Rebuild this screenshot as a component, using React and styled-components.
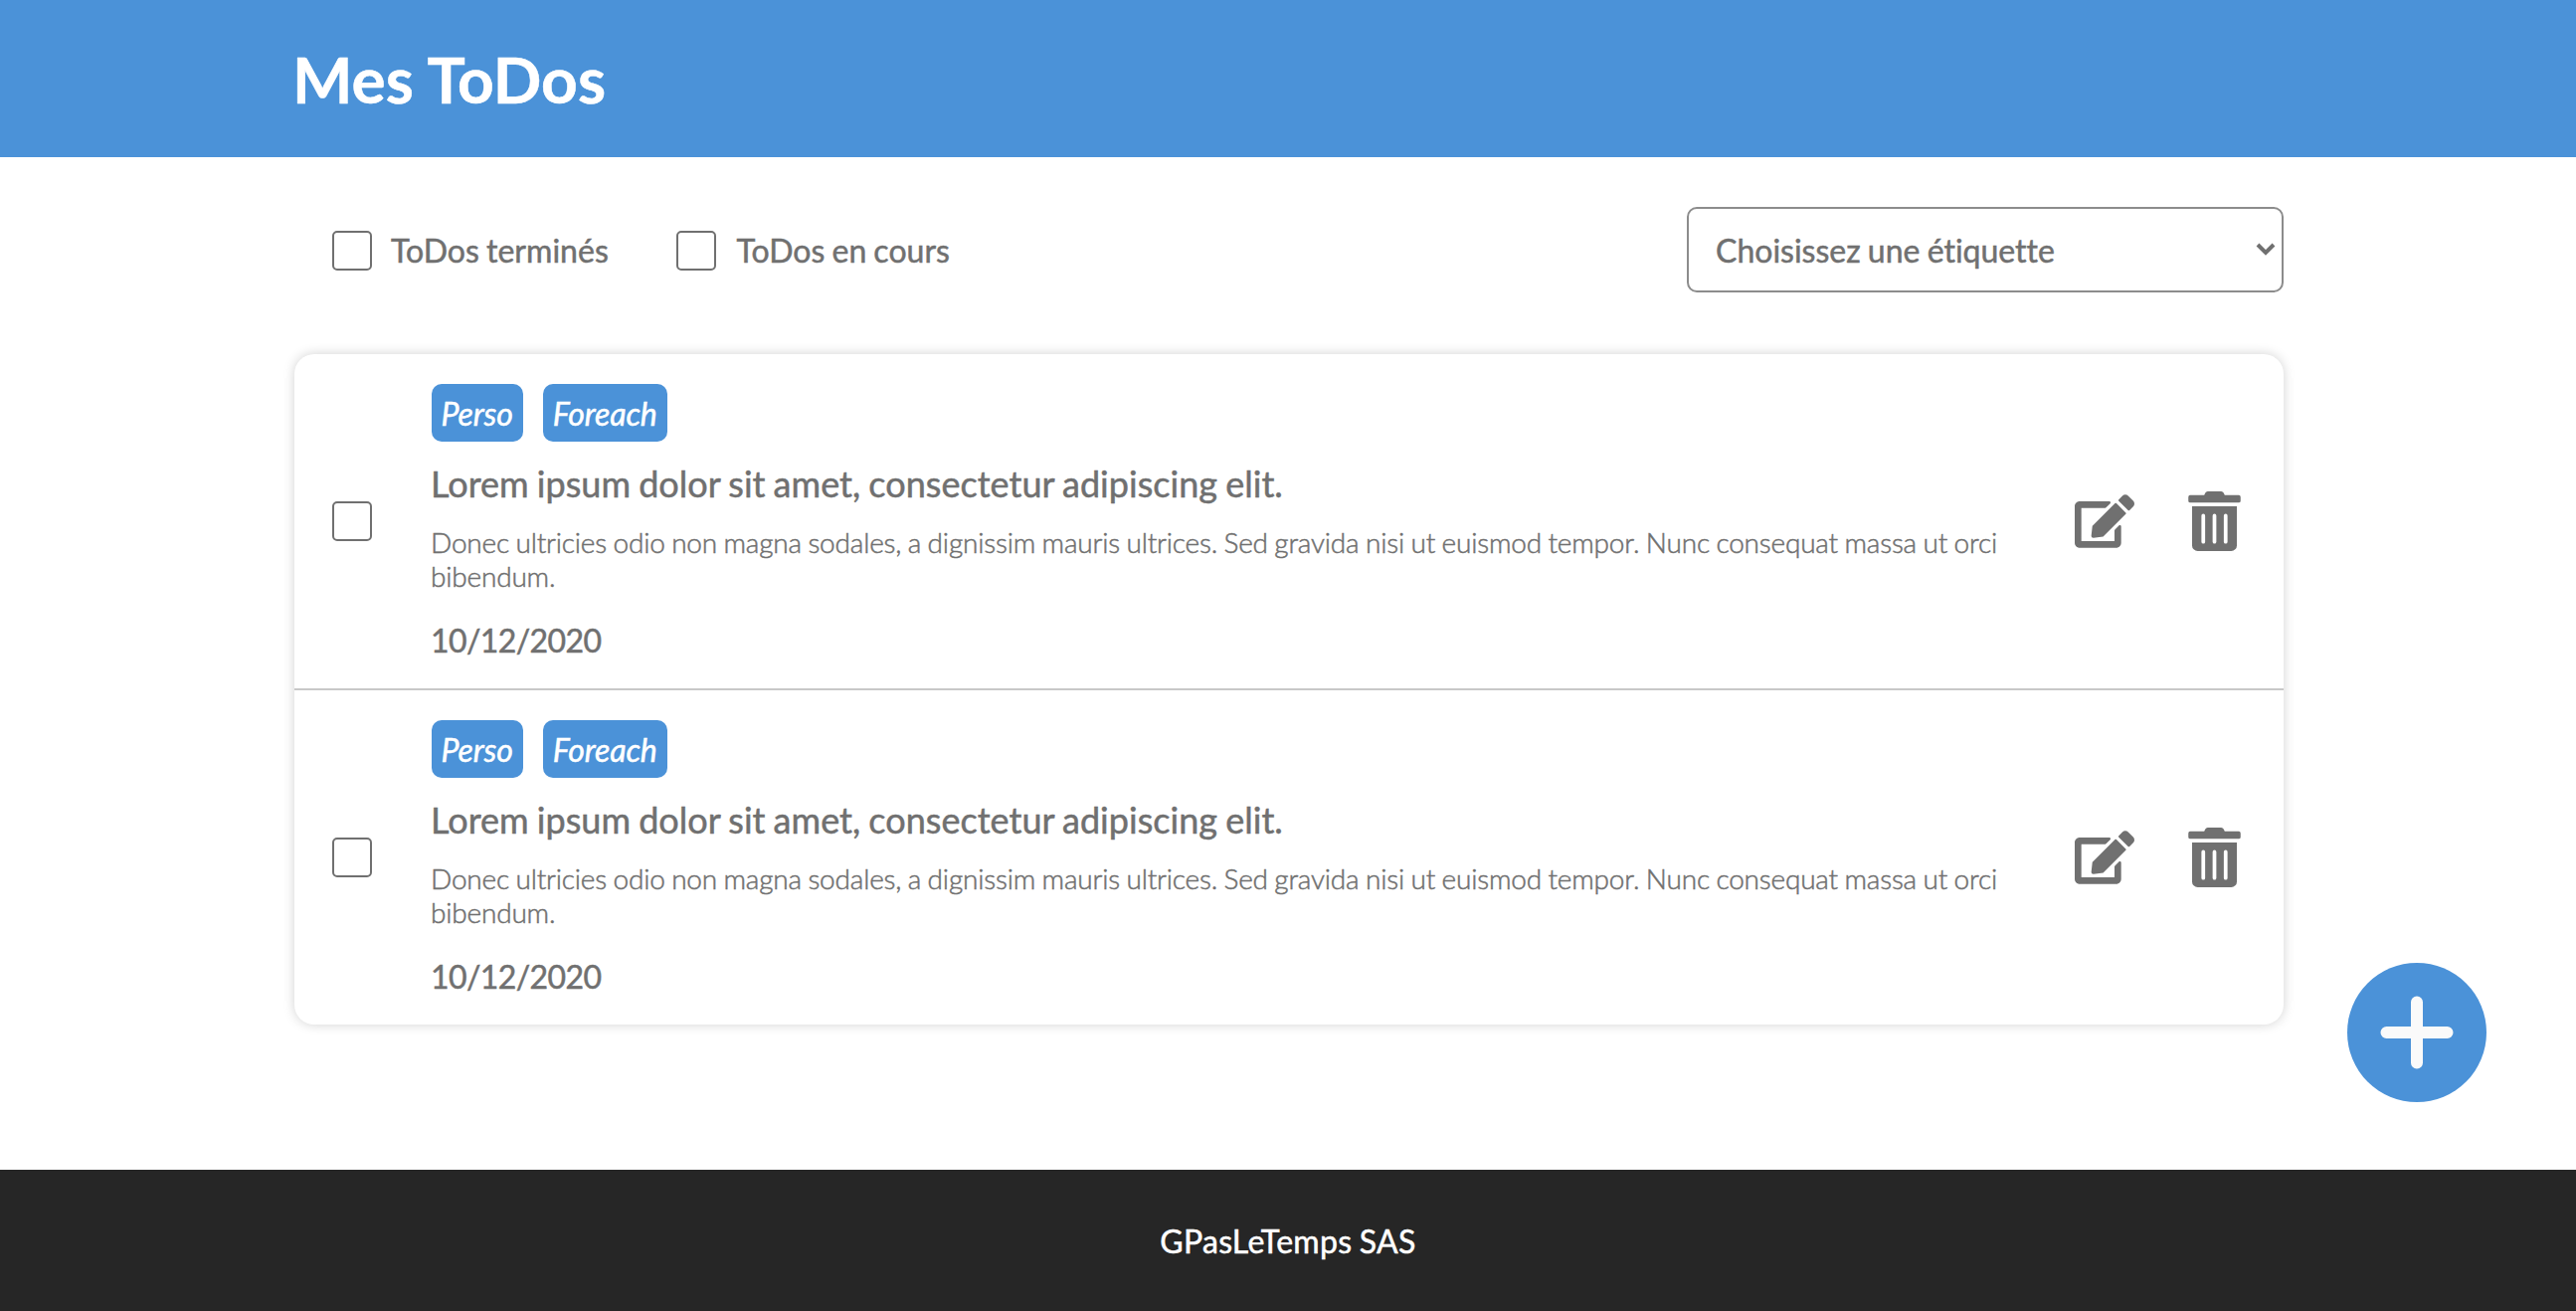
import React from "react";
import styled, { createGlobalStyle } from "styled-components";
import { FaEdit, FaTrashAlt } from "react-icons/fa";

const BLUE = "#4b92d8";
const GREY = "#707070";

const GlobalStyle = createGlobalStyle`
  *, *::before, *::after {
    box-sizing: border-box;
  }
  body {
    margin: 0;
    background: #fff;
    color: ${GREY};
    font-family: Lato, "Open Sans", sans-serif;
    font-size: 32px;
    line-height: 1.2;
    font-variant-ligatures: none;
    -webkit-text-stroke: 0.5px currentColor;
  }
`;

const Page = styled.div`
  min-height: 100vh;
  display: flex;
  flex-direction: column;
`;

const Container = styled.div`
  width: 2000px;
  margin-left: 296px;
`;

const Header = styled.header`
  height: 158px;
  padding-top: 42px;
  background: ${BLUE};
`;

const Title = styled.h1`
  margin: 0 0 0 -2px;
  color: #fff;
  font-size: 64px;
  font-weight: 700;
`;

const Main = styled.main`
  flex: 1;
  padding-top: 50px;
`;

const Filters = styled.div`
  display: flex;
  align-items: center;
  justify-content: space-between;
  height: 86px;
  padding-left: 38px;
  margin-bottom: 62px;
`;

const FilterGroup = styled.div`
  display: flex;
  align-items: center;
  padding-top: 2px;
`;

const FilterLabel = styled.label`
  display: flex;
  align-items: center;
  gap: ${(p) => p.$gap}px;
  width: 346px;
  letter-spacing: 0.04px;
  word-spacing: -1.2px;
  white-space: nowrap;
`;

const Checkbox = styled.input.attrs({ type: "checkbox" })`
  appearance: none;
  flex: none;
  width: 40px;
  height: 40px;
  margin: 0;
  border: 2px solid ${GREY};
  border-radius: 5px;
  background: #fff;
`;

const SelectBox = styled.div`
  display: grid;
  align-items: center;
  width: 600px;
  height: 86px;

  > * {
    grid-area: 1 / 1;
  }
`;

const Select = styled.select`
  appearance: none;
  width: 100%;
  height: 100%;
  padding: 2px 60px 0 27px;
  border: 2px solid #8c8c8c;
  border-radius: 10px;
  background: #fff;
  color: ${GREY};
  font: inherit;
  font-variant-ligatures: none;
  word-spacing: -1px;
`;

const Chevron = styled.svg`
  justify-self: end;
  width: 20px;
  height: 14px;
  margin: 0 8px 2px 0;
  fill: none;
  stroke: ${GREY};
  stroke-width: 4;
  pointer-events: none;
`;

const List = styled.ul`
  margin: 0;
  padding: 0;
  list-style: none;
  border-radius: 20px;
  box-shadow: 0 0 12px rgba(0, 0, 0, 0.18);
  background: #fff;
`;

const Item = styled.li`
  display: flex;
  align-items: center;
  height: ${(p) => (p.$last ? 336 : 338)}px;
  padding: 30px 43px 30px 38px;
  border-bottom: ${(p) => (p.$last ? "none" : "2px solid #c8c8c8")};
`;

const Content = styled.div`
  width: 1600px;
  margin-left: 60px;
`;

const Tags = styled.div`
  display: flex;
  gap: 20px;
`;

const Tag = styled.em`
  height: 58px;
  padding: 11px 10.5px 9px 9.5px;
  border-radius: 10px;
  background: ${BLUE};
  color: #fff;
  letter-spacing: -0.1px;
  line-height: 38px;
`;

const ItemTitle = styled.h2`
  margin: 20px 0 20px -1px;
  font-size: 36px;
  font-weight: 400;
  letter-spacing: 0.04px;
  word-spacing: -1.2px;
  line-height: 44px;
`;

const Description = styled.p`
  margin: 0 0 28px -1px;
  font-size: 28px;
  font-weight: 300;
  letter-spacing: -0.19px;
  word-spacing: -0.9px;
  line-height: 34px;
`;

const DateText = styled.time`
  display: block;
  margin-left: -1px;
  padding-top: 1px;
  margin-bottom: -1px;
  letter-spacing: -0.6px;
  line-height: 38px;
`;

const Actions = styled.div`
  display: flex;
  align-items: center;
  gap: 54px;
  margin-left: auto;
`;

const IconButton = styled.button`
  display: flex;
  padding: 0;
  border: 0;
  background: none;
  color: ${GREY};

  svg {
    width: ${(p) => p.$width}px;
    height: 60px;
  }
`;

const AddButton = styled.button`
  position: fixed;
  right: 90px;
  bottom: 210px;
  display: flex;
  align-items: center;
  justify-content: center;
  width: 140px;
  height: 140px;
  padding: 0;
  border: 0;
  border-radius: 50%;
  background: ${BLUE};

  svg {
    width: 74px;
    height: 74px;
    stroke: #fafafa;
    stroke-width: 12;
    stroke-linecap: round;
  }
`;

const Footer = styled.footer`
  display: flex;
  align-items: center;
  justify-content: center;
  height: 142px;
  padding-top: 2px;
  background: #262626;
  color: #fff;
  letter-spacing: 0.3px;
  word-spacing: -1px;
`;

const todos = [1, 2].map((id) => ({
  id,
  tags: ["Perso", "Foreach"],
  title: "Lorem ipsum dolor sit amet, consectetur adipiscing elit.",
  description:
    "Donec ultricies odio non magna sodales, a dignissim mauris ultrices. Sed gravida nisi ut euismod tempor. Nunc consequat massa ut orci bibendum.",
  date: "10/12/2020",
}));

function Todo({ todo, last }) {
  return (
    <Item $last={last}>
      <Checkbox />
      <Content>
        <Tags>
          {todo.tags.map((tag) => (
            <Tag key={tag}>{tag}</Tag>
          ))}
        </Tags>
        <ItemTitle>{todo.title}</ItemTitle>
        <Description>{todo.description}</Description>
        <DateText>{todo.date}</DateText>
      </Content>
      <Actions>
        <IconButton $width={60}>
          <FaEdit />
        </IconButton>
        <IconButton $width={53}>
          <FaTrashAlt />
        </IconButton>
      </Actions>
    </Item>
  );
}

export default function App() {
  return (
    <Page>
      <GlobalStyle />
      <Header>
        <Container>
          <Title>Mes ToDos</Title>
        </Container>
      </Header>
      <Main>
        <Container>
          <Filters>
            <FilterGroup>
              <FilterLabel $gap={19}>
                <Checkbox />
                ToDos terminés
              </FilterLabel>
              <FilterLabel $gap={20.5}>
                <Checkbox />
                ToDos en cours
              </FilterLabel>
            </FilterGroup>
            <SelectBox>
              <Select>
                <option>Choisissez une étiquette</option>
              </Select>
              <Chevron viewBox="0 0 20 14">
                <path d="M2 3 L10 11 L18 3" />
              </Chevron>
            </SelectBox>
          </Filters>
          <List>
            {todos.map((todo, i) => (
              <Todo key={todo.id} todo={todo} last={i === todos.length - 1} />
            ))}
          </List>
        </Container>
      </Main>
      <Footer>GPasLeTemps SAS</Footer>
      <AddButton>
        <svg viewBox="0 0 74 74">
          <path d="M37 6.5V67.5M6.5 37H67.5" />
        </svg>
      </AddButton>
    </Page>
  );
}
